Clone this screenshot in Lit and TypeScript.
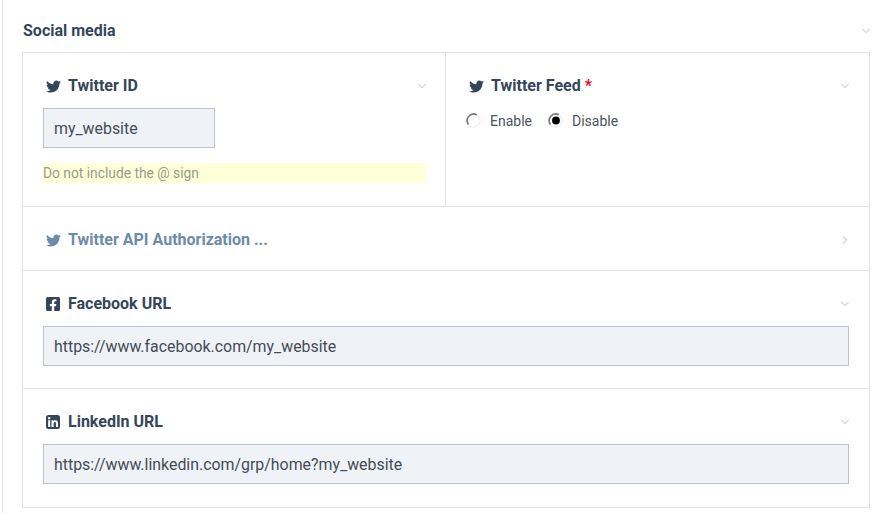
import { LitElement, html, css, svg } from "lit";
import { customElement } from "lit/decorators.js";

const tw = svg`<path d="M459.37 151.716c.325 4.548.325 9.097.325 13.645 0 138.72-105.583 298.558-298.558 298.558-59.452 0-114.68-17.219-161.137-47.106 8.447.974 16.568 1.299 25.34 1.299 49.055 0 94.213-16.568 130.274-44.832-46.132-.975-84.792-31.188-98.112-72.772 6.498.974 12.995 1.624 19.818 1.624 9.421 0 18.843-1.3 27.614-3.573-48.081-9.747-84.143-51.98-84.143-102.985v-1.299c13.969 7.797 30.214 12.67 47.431 13.319-28.264-18.843-46.781-51.005-46.781-87.391 0-19.492 5.197-37.36 14.294-52.954 51.655 63.675 129.3 105.258 216.365 109.807-1.624-7.797-2.599-15.918-2.599-24.04 0-57.828 46.782-104.934 104.934-104.934 30.213 0 57.502 12.67 76.67 33.137 23.715-4.548 46.456-13.32 66.599-25.34-7.798 24.366-24.366 44.833-46.132 57.827 21.117-2.273 41.584-8.122 60.426-16.243-14.292 20.791-32.161 39.308-52.628 54.253z"/>`;
const fb = svg`<path d="M400 32H48A48 48 0 0 0 0 80v352a48 48 0 0 0 48 48h137.25V327.69h-63V256h63v-54.64c0-62.15 37-96.48 93.67-96.48 27.14 0 55.52 4.84 55.52 4.84v61h-31.27c-30.81 0-40.42 19.12-40.42 38.73V256h68.78l-11 71.69h-57.78V480H400a48 48 0 0 0 48-48V80a48 48 0 0 0-48-48z"/>`;
const li = svg`<path fill-rule="evenodd" d="M80 32H368A80 80 0 0 1 448 112V400A80 80 0 0 1 368 480H80A80 80 0 0 1 0 400V112A80 80 0 0 1 80 32ZM135.4 416H69V202.2h66.5V416zm-33.2-243c-21.3 0-38.5-17.3-38.5-38.5S80.9 96 102.2 96c21.2 0 38.5 17.3 38.5 38.5 0 21.3-17.2 38.5-38.5 38.5zm282.1 243h-66.4V312c0-24.8-.5-56.7-34.5-56.7-34.6 0-39.9 27-39.9 54.9V416h-66.4V202.2h63.7v29.2h.9c8.9-16.8 30.6-34.5 62.9-34.5 67.2 0 79.7 44.3 79.7 101.9V416z"/>`;

const down = html`<svg class="chev" viewBox="0 0 12 12"><path d="M1.5 3.5 6 8l4.5-4.5" fill="none" stroke="currentColor" stroke-width="1.5"/></svg>`;
const right = html`<svg class="chev" viewBox="0 0 12 12"><path d="M3.5 1.5 8 6l-4.5 4.5" fill="none" stroke="currentColor" stroke-width="1.5"/></svg>`;

const radio = (checked: boolean) => html`<svg class="radio" viewBox="0 0 16 16">
  <circle cx="8" cy="8" r="7" fill="#fff" stroke="#ececec" stroke-width="1.2"/>
  <path d="M2.6 12.2A7 7 0 0 1 11.5 1.9" fill="none" stroke="#777" stroke-width="1.7"/>
  ${checked ? svg`<circle cx="8.5" cy="8" r="4.2" fill="#000"/>` : ""}
</svg>`;

const icon = (path: unknown, square: boolean) =>
  html`<svg class="ic ${square ? "sq" : ""}" viewBox=${square ? "0 32 448 448" : "0 0 512 512"}>${path}</svg>`;

const label = (path: unknown, text: string, opts: { req?: boolean; square?: boolean } = {}) => html`<div class="head">
  <span class="title">${icon(path, !!opts.square)}${text}${opts.req ? html`<span class="req">*</span>` : ""}</span>
  ${down}
</div>`;

@customElement("app-root")
export class AppRoot extends LitElement {
  static styles = css`
    :host {
      display: block;
      height: 513px;
      overflow: hidden;
      background: #fff;
      font-family: Roboto, sans-serif;
      color: #2e3f50;
    }
    .outer {
      margin-left: 2px;
      border-left: 1px solid #e6e6e6;
      padding: 0 8px 0 19px;
      height: 513px;
      box-sizing: border-box;
    }
    .top {
      display: flex;
      align-items: center;
      justify-content: space-between;
      height: 52px;
      padding: 9px 0 0 1px;
      box-sizing: border-box;
      font-size: 16px;
      font-weight: 700;
      color: #34465a;
    }
    .panel { border: 1px solid #e0e2e4; }
    .row { border-top: 1px solid #e0e2e4; padding: 22px 20px 22px; }
    .row:first-child { border-top: 0; }
    .split { display: grid; grid-template-columns: 422px 1fr; padding: 0; height: 153px; box-sizing: border-box; }
    .cell { padding: 22px 19px 0 20px; min-width: 0; }
    .cell + .cell { border-left: 1px solid #e0e2e4; padding-right: 20px; }
    .head {
      display: flex;
      align-items: center;
      justify-content: space-between;
      box-sizing: border-box;
      height: 22px;
      margin-bottom: 11px;
      padding: 0 0 0 3px;
    }
    .title {
      display: flex;
      align-items: center;
      font-size: 16px;
      font-weight: 700;
      line-height: 22px;
      color: #34465a;
      white-space: nowrap;
    }
    .ic { width: 15px; height: 15px; margin-right: 7px; fill: #34465a; flex: none; }
    .ic.sq { width: 14px; height: 14px; margin-right: 8px; }
    .req { color: #e8112d; margin-left: 4px; }
    .chev { width: 10px; height: 10px; color: #d4d6d8; margin-right: -1px; flex: none; }
    .input {
      height: 40px;
      box-sizing: border-box;
      display: flex;
      align-items: center;
      padding: 0 10px;
      background: #eff3f8;
      border: 1px solid #bcc3cc;
      font-size: 15.9px;
      color: #434c55;
    }
    .short { width: 172px; }
    .help {
      margin-top: 15px;
      height: 20px;
      line-height: 21px;
      background: #ffffd8;
      font-size: 13.8px;
      color: #9a9a92;
    }
    .radios {
      display: flex;
      align-items: center;
      margin-top: 15px;
      font-size: 14px;
      color: #4a545e;
    }
    .radio { width: 15px; height: 15px; margin: -1px 9px 0 0; flex: none; }
    .opt { display: flex; align-items: center; margin-right: 16px; padding-top: 1px; }
    .muted { padding-bottom: 19px; }
    .muted .head { margin-bottom: 0; }
    .muted .title { color: #6b8bab; }
    .muted .ic { fill: #6b8bab; }
    .last { padding-bottom: 23px; }
  `;

  render() {
    return html`<div class="outer">
      <div class="top"><span>Social media</span>${down}</div>
      <div class="panel">
        <div class="row split">
          <div class="cell">
            ${label(tw, "Twitter ID")}
            <div class="input short">my_website</div>
            <div class="help">Do not include the @ sign</div>
          </div>
          <div class="cell">
            ${label(tw, "Twitter Feed", { req: true })}
            <div class="radios">
              <span class="opt">${radio(false)}Enable</span>
              <span class="opt">${radio(true)}Disable</span>
            </div>
          </div>
        </div>
        <div class="row muted">
          <div class="head">
            <span class="title">${icon(tw, false)}Twitter API Authorization ...</span>
            ${right}
          </div>
        </div>
        <div class="row">
          ${label(fb, "Facebook URL", { square: true })}
          <div class="input">https://www.facebook.com/my_website</div>
        </div>
        <div class="row last">
          ${label(li, "LinkedIn URL", { square: true })}
          <div class="input">https://www.linkedin.com/grp/home?my_website</div>
        </div>
      </div>
    </div>`;
  }
}
